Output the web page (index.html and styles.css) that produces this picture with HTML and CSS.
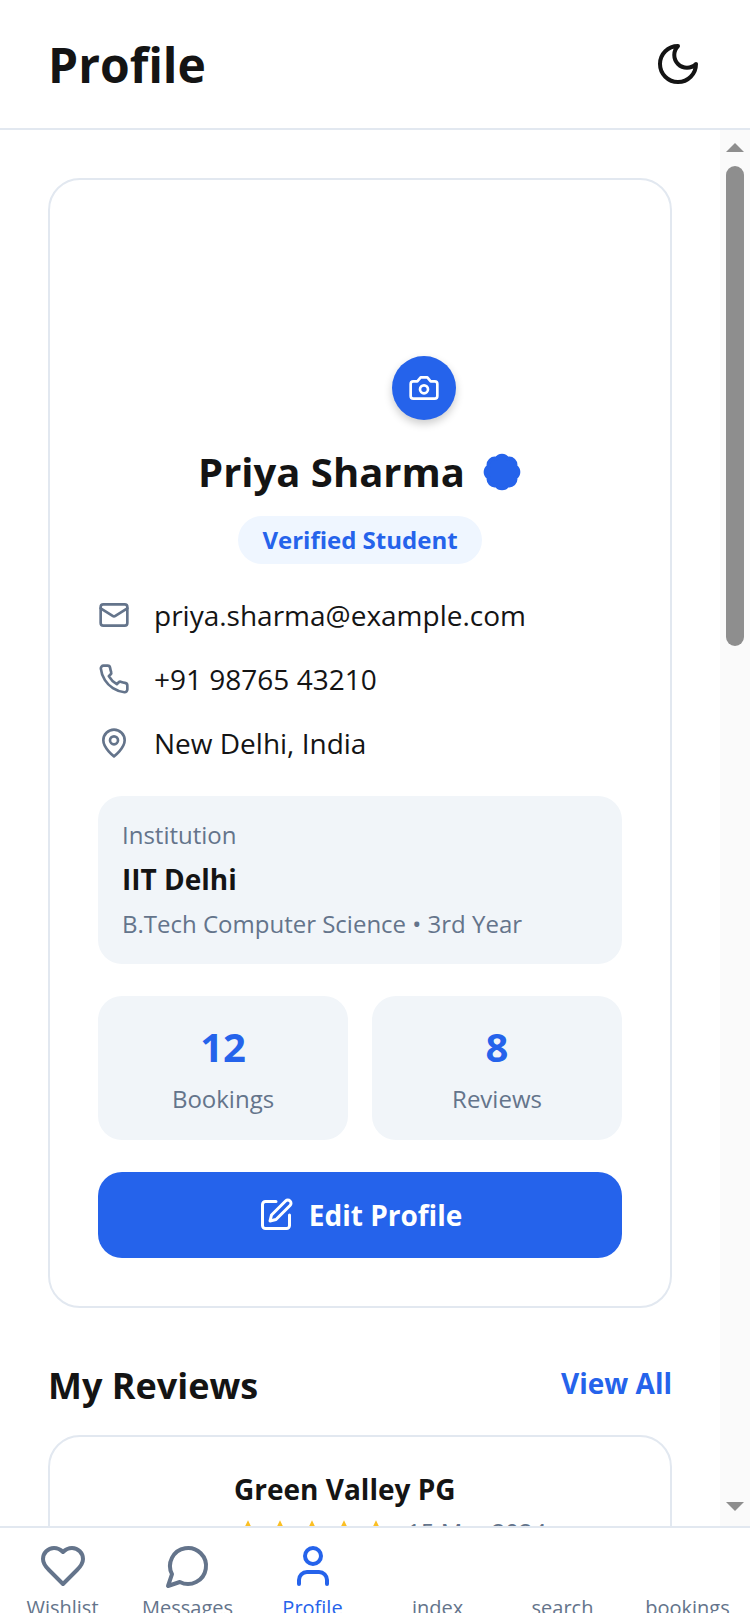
FILE: index.html
```html
<!DOCTYPE html>
<html lang="en">
<head>
    <meta charset="UTF-8">
    <title>Profile</title>
    <link rel="stylesheet" href="styles.css">
</head>
<body>
<div id="app">
    <header class="topBar">
        <h1>Profile</h1>
        <svg class="icon moon" viewBox="0 0 24 24"><path d="M12 3a6 6 0 0 0 9 9 9 9 0 1 1-9-9Z"/></svg>
    </header>
    <div class="middle">
        <main class="content">
            <section class="card profileCard">
                <div class="avatarArea">
                    <button class="cameraBtn">
                        <svg class="icon" viewBox="0 0 24 24"><path d="M14.5 4h-5L7 7H4a2 2 0 0 0-2 2v9a2 2 0 0 0 2 2h16a2 2 0 0 0 2-2V9a2 2 0 0 0-2-2h-3l-2.5-3z"/><circle cx="12" cy="13" r="3"/></svg>
                    </button>
                </div>
                <div class="nameRow">
                    <h2>Priya Sharma</h2>
                    <svg class="badge" viewBox="0 0 24 24"><path d="M3.85 8.62a4 4 0 0 1 4.78-4.77 4 4 0 0 1 6.74 0 4 4 0 0 1 4.78 4.78 4 4 0 0 1 0 6.74 4 4 0 0 1-4.77 4.78 4 4 0 0 1-6.75 0 4 4 0 0 1-4.78-4.77 4 4 0 0 1 0-6.76Z"/></svg>
                </div>
                <div class="pillWrap"><span class="pill">Verified Student</span></div>
                <ul class="contact">
                    <li>
                        <svg class="icon" viewBox="0 0 24 24"><rect x="2" y="4" width="20" height="16" rx="2"/><path d="m22 7-8.97 5.7a1.94 1.94 0 0 1-2.06 0L2 7"/></svg>
                        <span>priya.sharma@example.com</span>
                    </li>
                    <li>
                        <svg class="icon" viewBox="0 0 24 24"><path d="M22 16.92v3a2 2 0 0 1-2.18 2 19.79 19.79 0 0 1-8.63-3.07 19.5 19.5 0 0 1-6-6 19.79 19.79 0 0 1-3.07-8.67A2 2 0 0 1 4.11 2h3a2 2 0 0 1 2 1.72c.13.96.36 1.9.7 2.81a2 2 0 0 1-.45 2.11L8.09 9.91a16 16 0 0 0 6 6l1.27-1.27a2 2 0 0 1 2.11-.45c.91.34 1.85.57 2.81.7A2 2 0 0 1 22 16.92z"/></svg>
                        <span>+91 98765 43210</span>
                    </li>
                    <li>
                        <svg class="icon" viewBox="0 0 24 24"><path d="M20 10c0 6-8 12-8 12s-8-6-8-12a8 8 0 0 1 16 0Z"/><circle cx="12" cy="10" r="3"/></svg>
                        <span>New Delhi, India</span>
                    </li>
                </ul>
                <div class="institution">
                    <div class="instLabel">Institution</div>
                    <div class="instName">IIT Delhi</div>
                    <div class="instCourse">B.Tech Computer Science • 3rd Year</div>
                </div>
                <div class="stats">
                    <div class="stat"><div class="statNum">12</div><div class="statLabel">Bookings</div></div>
                    <div class="stat"><div class="statNum">8</div><div class="statLabel">Reviews</div></div>
                </div>
                <button class="editBtn">
                    <svg class="icon" viewBox="0 0 24 24"><path d="M12 3H5a2 2 0 0 0-2 2v14a2 2 0 0 0 2 2h14a2 2 0 0 0 2-2v-7"/><path d="M18.375 2.625a2.121 2.121 0 1 1 3 3L12 15l-4 1 1-4Z"/></svg>
                    Edit Profile
                </button>
            </section>
            <div class="sectionHead">
                <h3>My Reviews</h3>
                <a href="#">View All</a>
            </div>
            <section class="card reviewCard">
                <div class="reviewBody">
                    <div class="reviewName">Green Valley PG</div>
                    <div class="reviewMeta">
                        <span class="stars">
                            <svg viewBox="0 0 24 24"><path d="m12 2 3.09 6.26L22 9.27l-5 4.87 1.18 6.88L12 17.77l-6.18 3.25L7 14.14 2 9.27l6.91-1.01z"/></svg>
                            <svg viewBox="0 0 24 24"><path d="m12 2 3.09 6.26L22 9.27l-5 4.87 1.18 6.88L12 17.77l-6.18 3.25L7 14.14 2 9.27l6.91-1.01z"/></svg>
                            <svg viewBox="0 0 24 24"><path d="m12 2 3.09 6.26L22 9.27l-5 4.87 1.18 6.88L12 17.77l-6.18 3.25L7 14.14 2 9.27l6.91-1.01z"/></svg>
                            <svg viewBox="0 0 24 24"><path d="m12 2 3.09 6.26L22 9.27l-5 4.87 1.18 6.88L12 17.77l-6.18 3.25L7 14.14 2 9.27l6.91-1.01z"/></svg>
                            <svg viewBox="0 0 24 24"><path d="m12 2 3.09 6.26L22 9.27l-5 4.87 1.18 6.88L12 17.77l-6.18 3.25L7 14.14 2 9.27l6.91-1.01z"/></svg>
                        </span>
                        <span class="reviewDate">15 Mar 2024</span>
                    </div>
                </div>
            </section>
        </main>
        <div class="scrollBar">
            <div class="arrowUp"></div>
            <div class="track"><div class="thumb"></div></div>
            <div class="arrowDown"></div>
        </div>
    </div>
    <nav class="bottomNav">
        <a class="navItem" href="#">
            <svg class="icon" viewBox="0 0 24 24"><path d="M19 14c1.49-1.46 3-3.21 3-5.5A5.5 5.5 0 0 0 16.5 3c-1.76 0-3 .5-4.5 2-1.5-1.5-2.74-2-4.5-2A5.5 5.5 0 0 0 2 8.5c0 2.3 1.5 4.05 3 5.5l7 7Z"/></svg>
            <span>Wishlist</span>
        </a>
        <a class="navItem" href="#">
            <svg class="icon" viewBox="0 0 24 24"><path d="M7.9 20A9 9 0 1 0 4 16.1L2 22Z"/></svg>
            <span>Messages</span>
        </a>
        <a class="navItem active" href="#">
            <svg class="icon" viewBox="0 0 24 24"><circle cx="12" cy="7" r="4"/><path d="M19 21v-2a4 4 0 0 0-4-4H9a4 4 0 0 0-4 4v2"/></svg>
            <span>Profile</span>
        </a>
        <a class="navItem" href="#"><div class="noIcon"></div><span>index</span></a>
        <a class="navItem" href="#"><div class="noIcon"></div><span>search</span></a>
        <a class="navItem" href="#"><div class="noIcon"></div><span>bookings</span></a>
    </nav>
</div>
</body>
</html>
```

FILE: styles.css
```css
* {
    padding: 0;
    margin: 0;
    box-sizing: border-box;
}
body {
    font-family: "Open Sans", "Noto Sans", sans-serif;
    color: #141414;
    background: #fff;
}
ul {
    list-style: none;
}
a {
    text-decoration: none;
}
button {
    border: none;
    font-family: inherit;
}
#app {
    width: 750px;
    height: 1624px;
    display: flex;
    flex-direction: column;
    overflow: hidden;
}
.icon {
    width: 32px;
    height: 32px;
    flex: none;
    fill: none;
    stroke: currentColor;
    stroke-width: 2;
    stroke-linecap: round;
    stroke-linejoin: round;
}

/* top bar */
.topBar {
    height: 130px;
    flex: none;
    display: flex;
    align-items: center;
    justify-content: space-between;
    padding: 0 48px;
    border-bottom: 2px solid #e2e8f0;
}
.topBar h1 {
    font-size: 48px;
    font-weight: 700;
}
.moon {
    width: 48px;
    height: 48px;
}

/* middle */
.middle {
    flex: 1;
    min-height: 0;
    display: flex;
}
.content {
    flex: 1;
    min-width: 0;
    overflow: hidden;
    padding: 48px 48px 0;
}
.card {
    border: 2px solid #e2e8f0;
    border-radius: 32px;
    background: #fff;
}
.profileCard {
    height: 1130px;
    padding: 0 48px;
}
.avatarArea {
    height: 240px;
    display: flex;
    justify-content: flex-end;
    align-items: flex-end;
    padding-right: 166px;
}
.cameraBtn {
    width: 64px;
    height: 64px;
    border-radius: 50%;
    background: #2563eb;
    color: #fff;
    display: flex;
    align-items: center;
    justify-content: center;
    box-shadow: 0 4px 8px rgba(0, 0, 0, .2);
}
.nameRow {
    margin-top: 22px;
    display: flex;
    align-items: center;
    justify-content: center;
    gap: 17px;
}
.nameRow h2 {
    font-size: 40px;
    font-weight: 700;
    line-height: 60px;
}
.badge {
    width: 40px;
    height: 40px;
    fill: #2563eb;
    stroke: #2563eb;
    stroke-width: 2;
}
.pillWrap {
    margin-top: 14px;
    text-align: center;
}
.pill {
    display: inline-block;
    height: 48px;
    line-height: 48px;
    padding: 0 24px;
    border-radius: 24px;
    background: #eff6ff;
    color: #2563eb;
    font-size: 24px;
    font-weight: 700;
}
.contact {
    margin-top: 19px;
}
.contact li {
    height: 64px;
    display: flex;
    align-items: center;
    gap: 24px;
    font-size: 28px;
}
.contact .icon {
    color: #64748b;
}
.institution {
    margin-top: 21px;
    height: 168px;
    padding: 21px 24px;
    border-radius: 24px;
    background: #f1f5f9;
    color: #64748b;
    font-size: 24px;
    line-height: 36px;
}
.instName {
    font-size: 28px;
    font-weight: 700;
    line-height: 44px;
    color: #141414;
    margin: 4px 0 5px;
}
.stats {
    margin-top: 32px;
    display: grid;
    grid-template-columns: 1fr 1fr;
    gap: 24px;
}
.stat {
    height: 144px;
    padding-top: 23px;
    border-radius: 24px;
    background: #f1f5f9;
    text-align: center;
}
.statNum {
    font-size: 40px;
    font-weight: 700;
    color: #2563eb;
}
.statLabel {
    font-size: 24px;
    color: #64748b;
    margin-top: 8px;
}
.editBtn {
    margin-top: 32px;
    width: 100%;
    height: 86px;
    border-radius: 24px;
    background: #2563eb;
    color: #fff;
    font-size: 28px;
    font-weight: 700;
    display: flex;
    align-items: center;
    justify-content: center;
    gap: 15px;
}
.editBtn .icon {
    width: 36px;
    height: 36px;
}

/* reviews */
.sectionHead {
    margin-top: 53px;
    display: flex;
    align-items: center;
    justify-content: space-between;
}
.sectionHead h3 {
    font-size: 36px;
    font-weight: 700;
}
.sectionHead a {
    font-size: 28px;
    font-weight: 700;
    color: #2563eb;
    padding-bottom: 6px;
}
.reviewCard {
    margin-top: 25px;
    height: 300px;
    padding: 33px 32px 32px 184px;
}
.reviewName {
    font-size: 28px;
    font-weight: 700;
}
.reviewMeta {
    display: flex;
    align-items: center;
    gap: 17px;
    margin-top: 7px;
}
.stars {
    display: flex;
    gap: 4px;
}
.stars svg {
    width: 28px;
    height: 28px;
    fill: #fbbf24;
}
.reviewDate {
    font-size: 24px;
    color: #64748b;
}

/* fake scrollbar */
.scrollBar {
    width: 30px;
    flex: none;
    background: #fafafa;
    display: flex;
    flex-direction: column;
    align-items: center;
    padding: 13px 0 15px;
}
.arrowUp, .arrowDown {
    width: 0;
    height: 0;
    border-left: 9px solid transparent;
    border-right: 9px solid transparent;
}
.arrowUp {
    border-bottom: 9px solid #8e8e8e;
}
.arrowDown {
    border-top: 9px solid #8e8e8e;
}
.track {
    flex: 1;
    width: 100%;
    padding: 14px 6px;
}
.thumb {
    height: 480px;
    border-radius: 9px;
    background: #8e8e8e;
}

/* bottom nav */
.bottomNav {
    height: 98px;
    flex: none;
    display: grid;
    grid-template-columns: repeat(6, 1fr);
    background: #fff;
    border-top: 2px solid #e2e8f0;
}
.navItem {
    height: 85px;
    overflow: hidden;
    display: flex;
    flex-direction: column;
    align-items: center;
    padding-top: 14px;
    gap: 4px;
    color: #64748b;
    font-size: 20px;
}
.navItem .icon, .noIcon {
    width: 48px;
    height: 48px;
    flex: none;
}
.navItem.active {
    color: #2563eb;
}
```
